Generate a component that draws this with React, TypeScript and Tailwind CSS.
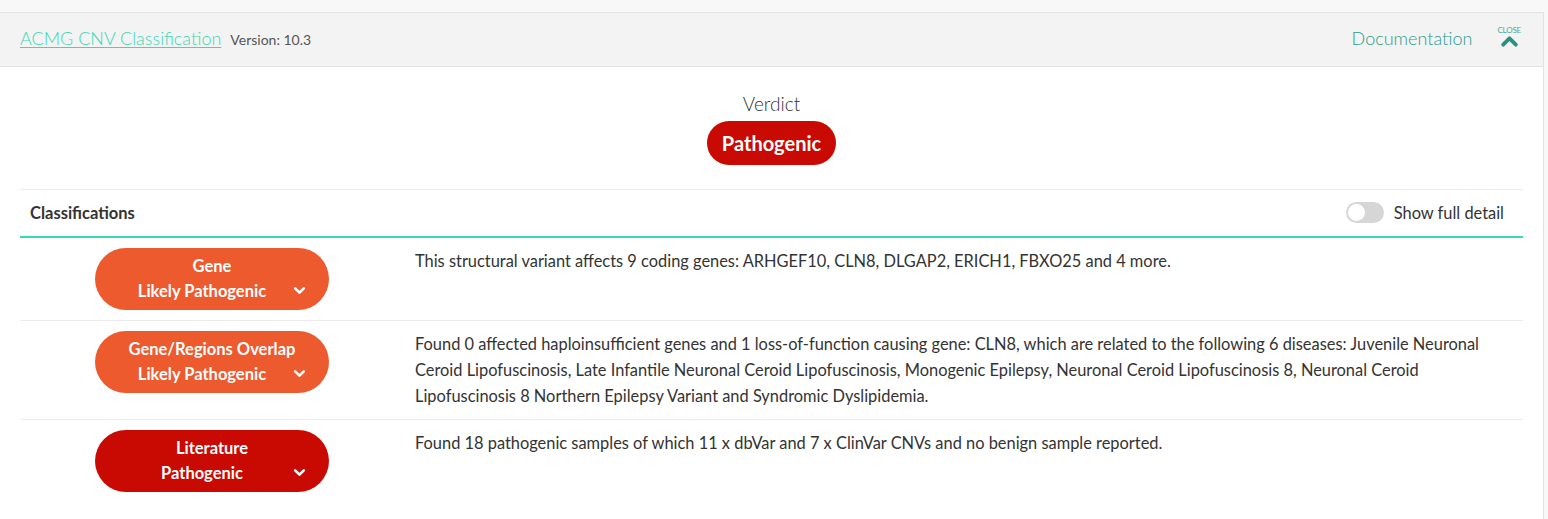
const rows = [
  {
    title: "Gene",
    verdict: "Likely Pathogenic",
    color: "bg-[#ec5a2d]",
    text: "This structural variant affects 9 coding genes: ARHGEF10, CLN8, DLGAP2, ERICH1, FBXO25 and 4 more.",
  },
  {
    title: "Gene/Regions Overlap",
    verdict: "Likely Pathogenic",
    color: "bg-[#ec5a2d]",
    text: "Found 0 affected haploinsufficient genes and 1 loss-of-function causing gene: CLN8, which are related to the following 6 diseases: Juvenile Neuronal Ceroid Lipofuscinosis, Late Infantile Neuronal Ceroid Lipofuscinosis, Monogenic Epilepsy, Neuronal Ceroid Lipofuscinosis 8, Neuronal Ceroid Lipofuscinosis 8 Northern Epilepsy Variant and Syndromic Dyslipidemia.",
  },
  {
    title: "Literature",
    verdict: "Pathogenic",
    color: "bg-[#c80a02]",
    text: "Found 18 pathogenic samples of which 11 x dbVar and 7 x ClinVar CNVs and no benign sample reported.",
  },
];

function Chevron({ className }: { className?: string }) {
  return (
    <svg viewBox="0 0 12 8" className={className} fill="none" stroke="currentColor" strokeWidth="2.4" strokeLinecap="round" strokeLinejoin="round">
      <path d="M2 2l4 4 4-4" />
    </svg>
  );
}

export default function App() {
  return (
    <div className="min-h-screen bg-[#f8f8f8] pt-3 font-['Lato',sans-serif]">
      <div className="w-[1544px] bg-white border-t border-r border-[#e2e2e2] min-h-[507px]">
        {/* header */}
        <div className="h-[54px] bg-[#f3f3f3] border-b border-[#e2e2e2] flex items-center pl-5 pr-[22px] pb-[3px]">
          <a className="text-[18px] font-light text-[#3ad8b4] underline underline-offset-2 decoration-1">
            ACMG CNV Classification
          </a>
          <span className="ml-[9px] text-[14px] text-[#555] mt-[3px]">Version: 10.3</span>
          <span className="ml-auto text-[18px] font-light text-[#2a9d8c]">Documentation</span>
          <div className="ml-[25px] flex flex-col items-center -mt-[4px]">
            <span className="text-[8px] leading-[10px] text-[#4aa89a] tracking-tight">CLOSE</span>
            <Chevron className="w-[19px] h-[13px] text-[#2a9080] rotate-180" />
          </div>
        </div>

        <div className="px-5">
          {/* verdict */}
          <div className="flex flex-col items-center pt-[25px] pb-[24px] border-b border-[#ececec]">
            <div className="text-[19px] leading-[24px] font-light text-[#333]">Verdict</div>
            <div className="mt-[5px] h-[44px] px-[15px] rounded-full bg-[#c80a02] text-white text-[20px] font-bold flex items-center">
              Pathogenic
            </div>
          </div>

          {/* classifications header */}
          <div className="h-[48px] flex items-center pl-[10px] pr-[19px] border-b-2 border-[#3ad8b4]">
            <span className="text-[16.5px] font-bold text-[#333]">Classifications</span>
            <div className="ml-auto flex items-center gap-[10px]">
              <div className="w-[38px] h-[21px] rounded-full bg-[#d6d6d6] p-[2px] flex">
                <div className="w-[17px] h-[17px] rounded-full bg-white" />
              </div>
              <span className="text-[16.4px] text-[#333]">Show full detail</span>
            </div>
          </div>

          {rows.map((r, i) => (
            <div
              key={r.title}
              className={`flex py-[10px] ${i < rows.length - 1 ? "border-b border-[#ececec]" : ""}`}
            >
              <div className="w-[384px] shrink-0 flex justify-center">
                <div
                  className={`relative w-[234px] h-[62px] rounded-full ${r.color} text-white text-[16.5px] font-bold leading-[25px] flex flex-col items-center justify-center`}
                >
                  <span>{r.title}</span>
                  <span className="pr-[20px]">{r.verdict}</span>
                  <Chevron className="absolute right-[23px] top-[38px] w-[13px] h-[9px]" />
                </div>
              </div>
              <p className="pl-[11px] pr-[20px] text-[16.4px] leading-[26px] text-[#333]">{r.text}</p>
            </div>
          ))}
        </div>
      </div>
    </div>
  );
}
